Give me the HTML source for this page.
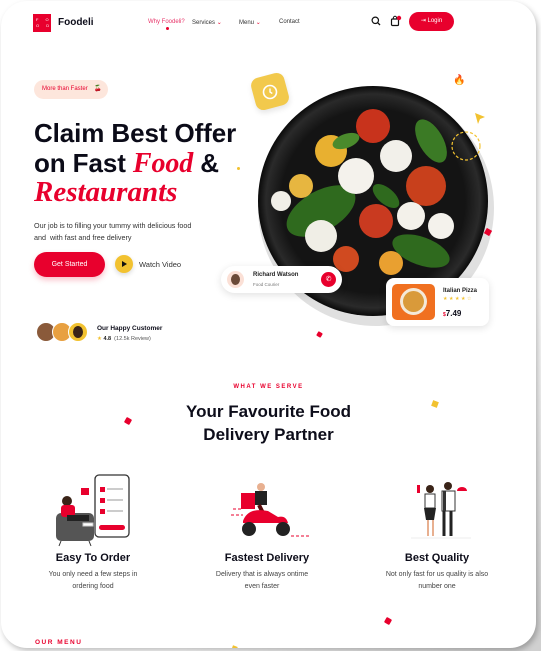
<!DOCTYPE html>
<html><head><meta charset="utf-8"><style>
*{margin:0;padding:0;box-sizing:border-box}
html,body{width:541px;height:651px;overflow:hidden;background:#fff;font-family:"Liberation Sans",sans-serif;color:#0d0d1a}
.bg{position:absolute;left:0;top:0;width:541px;height:651px;background:linear-gradient(135deg,#fff 70%,#cfcfcf 100%)}
.card{position:absolute;left:1px;top:1px;width:535px;height:647px;background:#fff;border-radius:26px;box-shadow:2px 3px 6px rgba(0,0,0,.25);overflow:hidden}
.a{position:absolute;white-space:nowrap}
.red{color:#e8002d}
.nav{font-size:6px;color:#333;top:18px}
.h1{font-size:26px;font-weight:bold;left:33px;letter-spacing:-.1px;color:#0b0b18}
.cur{font-family:"Liberation Serif",serif;font-style:italic;font-weight:bold;color:#e8002d}
.p{font-size:7.2px;color:#333;left:33px}
.ft{font-size:11px;font-weight:bold;text-align:center;width:180px}
.fd{font-size:7px;color:#444;text-align:center;width:180px;line-height:12px}
.dot{position:absolute;width:6px;height:6px;background:#e8002d;transform:rotate(30deg);border-radius:1px}
</style></head><body>
<div class="bg"></div>
<div class="card">
<!-- header -->
<div class="a" style="left:32px;top:13px;width:18px;height:18px;background:#e8002d;color:#fff;font-size:4px;line-height:6px;padding:3px 0 0 3px;letter-spacing:3px">F O<br>O D</div>
<div class="a" style="left:57px;top:16px;font-size:10px;font-weight:bold">Foodeli</div>
<div class="a nav red" style="left:147px;color:#e8356a">Why Foodeli?</div>
<div class="a" style="left:165px;top:26px;width:3px;height:3px;border-radius:50%;background:#e8002d"></div>
<div class="a nav" style="left:191px">Services <span class="red">⌄</span></div>
<div class="a nav" style="left:238px">Menu <span class="red">⌄</span></div>
<div class="a nav" style="left:278px">Contact</div>
<svg class="a" style="left:370px;top:15px" width="10" height="10" viewBox="0 0 10 10"><circle cx="4.3" cy="4.3" r="3.2" fill="none" stroke="#111" stroke-width="1.2"/><path d="M6.7 6.7L9 9" stroke="#111" stroke-width="1.3"/></svg>
<svg class="a" style="left:389px;top:14px" width="12" height="12" viewBox="0 0 12 12"><rect x="1.5" y="4" width="7" height="6.5" rx="1" fill="none" stroke="#111" stroke-width="1.2"/><path d="M3.3 4V3a1.7 1.7 0 0 1 3.4 0v1" fill="none" stroke="#111" stroke-width="1"/><circle cx="9" cy="3" r="2.2" fill="#e8002d"/></svg>
<div class="a" style="left:408px;top:11px;width:45px;height:19px;border-radius:10px;background:#e8002d;color:#fff;font-size:6px;text-align:center;line-height:19px">⇥ Login</div>
<!-- hero left -->
<div class="a" style="left:33px;top:79px;width:74px;height:19px;border-radius:10px;background:#fde6dc;color:#e8002d;font-size:6px;line-height:19px;padding-left:8px">More than Faster <span style="margin-left:5px">🍒</span></div>
<div class="a h1" style="top:117px">Claim Best Offer</div>
<div class="a h1" style="top:147px">on Fast <span class="cur" style="font-size:28px">Food</span> &amp;</div>
<div class="a cur" style="left:33px;top:175px;font-size:29px">Restaurants</div>
<div class="a" style="left:236px;top:166px;width:3px;height:3px;border-radius:50%;background:#f2c230"></div>
<div class="a p" style="top:220px">Our job is to filling your tummy with delicious food</div>
<div class="a p" style="top:232px">and &nbsp;with fast and free delivery</div>
<div class="a" style="left:33px;top:251px;width:71px;height:25px;border-radius:13px;background:#e8002d;color:#fff;font-size:7px;line-height:25px;text-align:center;box-shadow:0 3px 6px rgba(232,0,45,.25)">Get Started</div>
<div class="a" style="left:114px;top:254px;width:18px;height:18px;border-radius:50%;background:#f2c230;box-shadow:0 2px 5px rgba(0,0,0,.15)"></div>
<div class="a" style="left:121px;top:260px;width:0;height:0;border-left:5px solid #111;border-top:3px solid transparent;border-bottom:3px solid transparent"></div>
<div class="a" style="left:138px;top:259px;font-size:7.5px;color:#333">Watch Video</div>
<div class="a" style="left:35px;top:321px;width:20px;height:20px;border-radius:50%;background:#8a5a3a;border:1px solid #fff"></div>
<div class="a" style="left:51px;top:321px;width:20px;height:20px;border-radius:50%;background:#e8a040;border:1px solid #fff"></div>
<div class="a" style="left:67px;top:321px;width:20px;height:20px;border-radius:50%;background:#f2c230;border:1px solid #fff"></div>
<div class="a" style="left:72px;top:325px;width:10px;height:12px;border-radius:50%;background:#3a2418"></div>
<div class="a" style="left:96px;top:324px;font-size:6.5px;font-weight:bold">Our Happy Customer</div>
<div class="a" style="left:96px;top:335px;font-size:5.5px;color:#555"><span style="color:#f2c230">★</span> <b style="color:#222">4.8</b> &nbsp;(12.5k Review)</div>
<!-- plate -->
<svg class="a" style="left:240px;top:60px" width="300" height="280" viewBox="240 60 300 280">
<defs><radialGradient id="pl" cx=".5" cy=".5" r=".5"><stop offset=".8" stop-color="#141414"/><stop offset=".93" stop-color="#2a2a2a"/><stop offset="1" stop-color="#0a0a0a"/></radialGradient></defs>
<ellipse cx="375" cy="207" rx="118" ry="118" fill="#000" opacity=".12"/>
<circle cx="372" cy="200" r="115" fill="url(#pl)"/>
<g>
<ellipse cx="320" cy="210" rx="38" ry="20" fill="#2f6a1e" transform="rotate(-30 320 210)"/>
<ellipse cx="430" cy="140" rx="12" ry="24" fill="#3b7a25" transform="rotate(-30 430 140)"/>
<ellipse cx="420" cy="250" rx="30" ry="14" fill="#2f6a1e" transform="rotate(20 420 250)"/>
<circle cx="372" cy="125" r="17" fill="#c8331c"/>
<circle cx="330" cy="150" r="16" fill="#e8b030"/>
<circle cx="425" cy="185" r="20" fill="#c8401c"/>
<circle cx="395" cy="155" r="16" fill="#f2f0ea"/>
<circle cx="355" cy="175" r="18" fill="#f4f2ec"/>
<circle cx="320" cy="235" r="16" fill="#f0eee6"/>
<circle cx="375" cy="220" r="17" fill="#c93a20"/>
<circle cx="410" cy="215" r="14" fill="#f3f1ea"/>
<circle cx="440" cy="225" r="13" fill="#f4f2ec"/>
<circle cx="300" cy="185" r="12" fill="#e7b640"/>
<circle cx="345" cy="258" r="13" fill="#d04a20"/>
<circle cx="390" cy="262" r="12" fill="#e9a030"/>
<ellipse cx="385" cy="195" rx="16" ry="8" fill="#2f6a1e" transform="rotate(40 385 195)"/>
<ellipse cx="345" cy="140" rx="14" ry="7" fill="#4a8a2c" transform="rotate(-20 345 140)"/>
<circle cx="280" cy="200" r="10" fill="#f1efe8"/>
</g>
<circle cx="465" cy="145" r="14" fill="none" stroke="#f2c230" stroke-width="1.2" stroke-dasharray="3 2"/>
<path d="M474 112l10 4-5 2-2 5z" fill="#f2c230"/>
<text x="452" y="82" font-size="10">🔥</text>
<rect x="484" y="228" width="6" height="6" fill="#e8002d" transform="rotate(30 487 231)"/>
</svg>
<div class="a" style="left:252px;top:74px;width:34px;height:33px;border-radius:8px;background:#f2c94c;transform:rotate(-15deg);box-shadow:0 3px 6px rgba(0,0,0,.1)"></div>
<svg class="a" style="left:259px;top:81px" width="20" height="20" viewBox="0 0 20 20"><circle cx="10" cy="10" r="6.5" fill="none" stroke="#fff" stroke-width="1.6"/><path d="M10 6.5V10l2.3 1.5" fill="none" stroke="#fff" stroke-width="1.4"/></svg>
<!-- cards -->
<div class="a" style="left:220px;top:265px;width:121px;height:27px;border-radius:14px;background:#fff;box-shadow:0 2px 8px rgba(0,0,0,.12)"></div>
<div class="a" style="left:226px;top:270px;width:17px;height:17px;border-radius:50%;background:#fbe0d6"></div>
<div class="a" style="left:230px;top:273px;width:9px;height:11px;border-radius:50%;background:#6b4a38"></div>
<div class="a" style="left:252px;top:271px;font-size:6px;font-weight:bold;color:#222">Richard Watson</div>
<div class="a" style="left:252px;top:281px;font-size:4.5px;color:#777">Food Courier</div>
<div class="a" style="left:320px;top:271px;width:15px;height:15px;border-radius:50%;background:#e8002d;color:#fff;font-size:7px;text-align:center;line-height:15px">✆</div>
<div class="a" style="left:385px;top:277px;width:103px;height:48px;border-radius:8px;background:#fff;box-shadow:0 2px 8px rgba(0,0,0,.12)"></div>
<div class="a" style="left:391px;top:283px;width:43px;height:36px;border-radius:5px;background:#f07020"></div>
<div class="a" style="left:399px;top:287px;width:27px;height:27px;border-radius:50%;background:#f4e9d8"></div>
<div class="a" style="left:402px;top:290px;width:21px;height:21px;border-radius:50%;background:#d99a3a"></div>
<div class="a" style="left:442px;top:287px;font-size:6px;font-weight:bold;color:#222">Italian Pizza</div>
<div class="a" style="left:442px;top:295px;font-size:5px;color:#f2c230;letter-spacing:1.5px">★★★★☆</div>
<div class="a" style="left:442px;top:308px;font-size:8px;font-weight:bold"><span class="red" style="font-size:5px">$</span>7.49</div>
<div class="dot" style="left:316px;top:331px;width:5px;height:5px"></div>
<!-- serve -->
<div class="a red" style="left:0;width:535px;text-align:center;top:383px;font-size:6px;font-weight:bold;letter-spacing:1.5px">WHAT WE SERVE</div>
<div class="a" style="left:0;width:535px;text-align:center;top:399px;font-size:17px;font-weight:bold;line-height:23px">Your Favourite Food<br>Delivery Partner</div>
<div class="dot" style="left:124px;top:417px"></div>
<div class="a" style="left:431px;top:400px;width:6px;height:6px;background:#f2c230;transform:rotate(20deg)"></div>
<!-- illustrations -->
<svg class="a" style="left:52px;top:472px" width="80" height="75" viewBox="0 0 80 75"><rect x="42" y="2" width="34" height="62" rx="4" fill="#fff" stroke="#333" stroke-width="1.3"/><rect x="46" y="52" width="26" height="5" rx="2.5" fill="#e8002d"/><g fill="#e8002d"><rect x="47" y="14" width="5" height="5"/><rect x="47" y="25" width="5" height="5"/><rect x="47" y="36" width="5" height="5"/></g><g fill="#ccc"><rect x="54" y="15" width="16" height="2"/><rect x="54" y="26" width="16" height="2"/><rect x="54" y="37" width="16" height="2"/></g><rect x="3" y="40" width="38" height="28" rx="5" fill="#555"/><path d="M8 68l-2 5M36 68l2 5" stroke="#333"/><circle cx="14" cy="28" r="5" fill="#3a2418"/><rect x="8" y="32" width="14" height="12" rx="3" fill="#e8002d"/><rect x="14" y="42" width="22" height="6" fill="#222"/><rect x="30" y="50" width="10" height="3" fill="#fff" stroke="#ccc"/><rect x="28" y="15" width="8" height="7" fill="#e8002d"/></svg>
<svg class="a" style="left:230px;top:480px" width="80" height="60" viewBox="0 0 80 60"><rect x="10" y="12" width="14" height="16" fill="#e8002d"/><circle cx="30" cy="6" r="4" fill="#e8b090"/><rect x="24" y="10" width="12" height="14" fill="#222"/><path d="M28 24l8 16" stroke="#5a0a0a" stroke-width="4"/><path d="M12 40q5-14 25-10l10 6q8-2 10 6H12z" fill="#e8002d"/><circle cx="18" cy="48" r="7" fill="#222"/><circle cx="52" cy="48" r="7" fill="#222"/><path d="M2 28h10M0 34h12" stroke="#e8002d" stroke-dasharray="3 2"/><path d="M60 55h18" stroke="#e8002d" stroke-dasharray="3 2"/></svg>
<svg class="a" style="left:410px;top:480px" width="60" height="60" viewBox="0 0 60 60"><circle cx="19" cy="8" r="4" fill="#3a2418"/><rect x="14" y="13" width="10" height="14" fill="#fff" stroke="#333"/><path d="M13 27h12l-2 12h-8z" fill="#222"/><path d="M17 39v16M22 39v16" stroke="#e8b090" stroke-width="2"/><circle cx="37" cy="5" r="4" fill="#3a2418"/><rect x="31" y="10" width="13" height="20" fill="#fff" stroke="#333"/><rect x="32" y="10" width="3" height="20" fill="#333"/><path d="M33 30v25M40 30v25" stroke="#222" stroke-width="3"/><path d="M46 10a5 4 0 0 1 10 0z" fill="#e8002d"/><rect x="6" y="4" width="3" height="8" fill="#e8002d"/><path d="M0 57h60" stroke="#eee"/></svg>
<div class="a ft" style="left:2px;top:551px">Easy To Order</div>
<div class="a fd" style="left:2px;top:568px">You only need a few steps in<br>ordering food</div>
<div class="a ft" style="left:176px;top:551px">Fastest Delivery</div>
<div class="a fd" style="left:171px;top:568px">Delivery that is always ontime<br>even faster</div>
<div class="a ft" style="left:346px;top:551px">Best Quality</div>
<div class="a fd" style="left:346px;top:568px">Not only fast for us quality is also<br>number one</div>
<div class="dot" style="left:384px;top:617px"></div>
<div class="a red" style="left:34px;top:638px;font-size:6.5px;font-weight:bold;letter-spacing:1.5px">OUR MENU</div>
<div class="a" style="left:231px;top:645px;width:5px;height:5px;background:#f2c230;transform:rotate(20deg)"></div>
</div>
</body></html>
